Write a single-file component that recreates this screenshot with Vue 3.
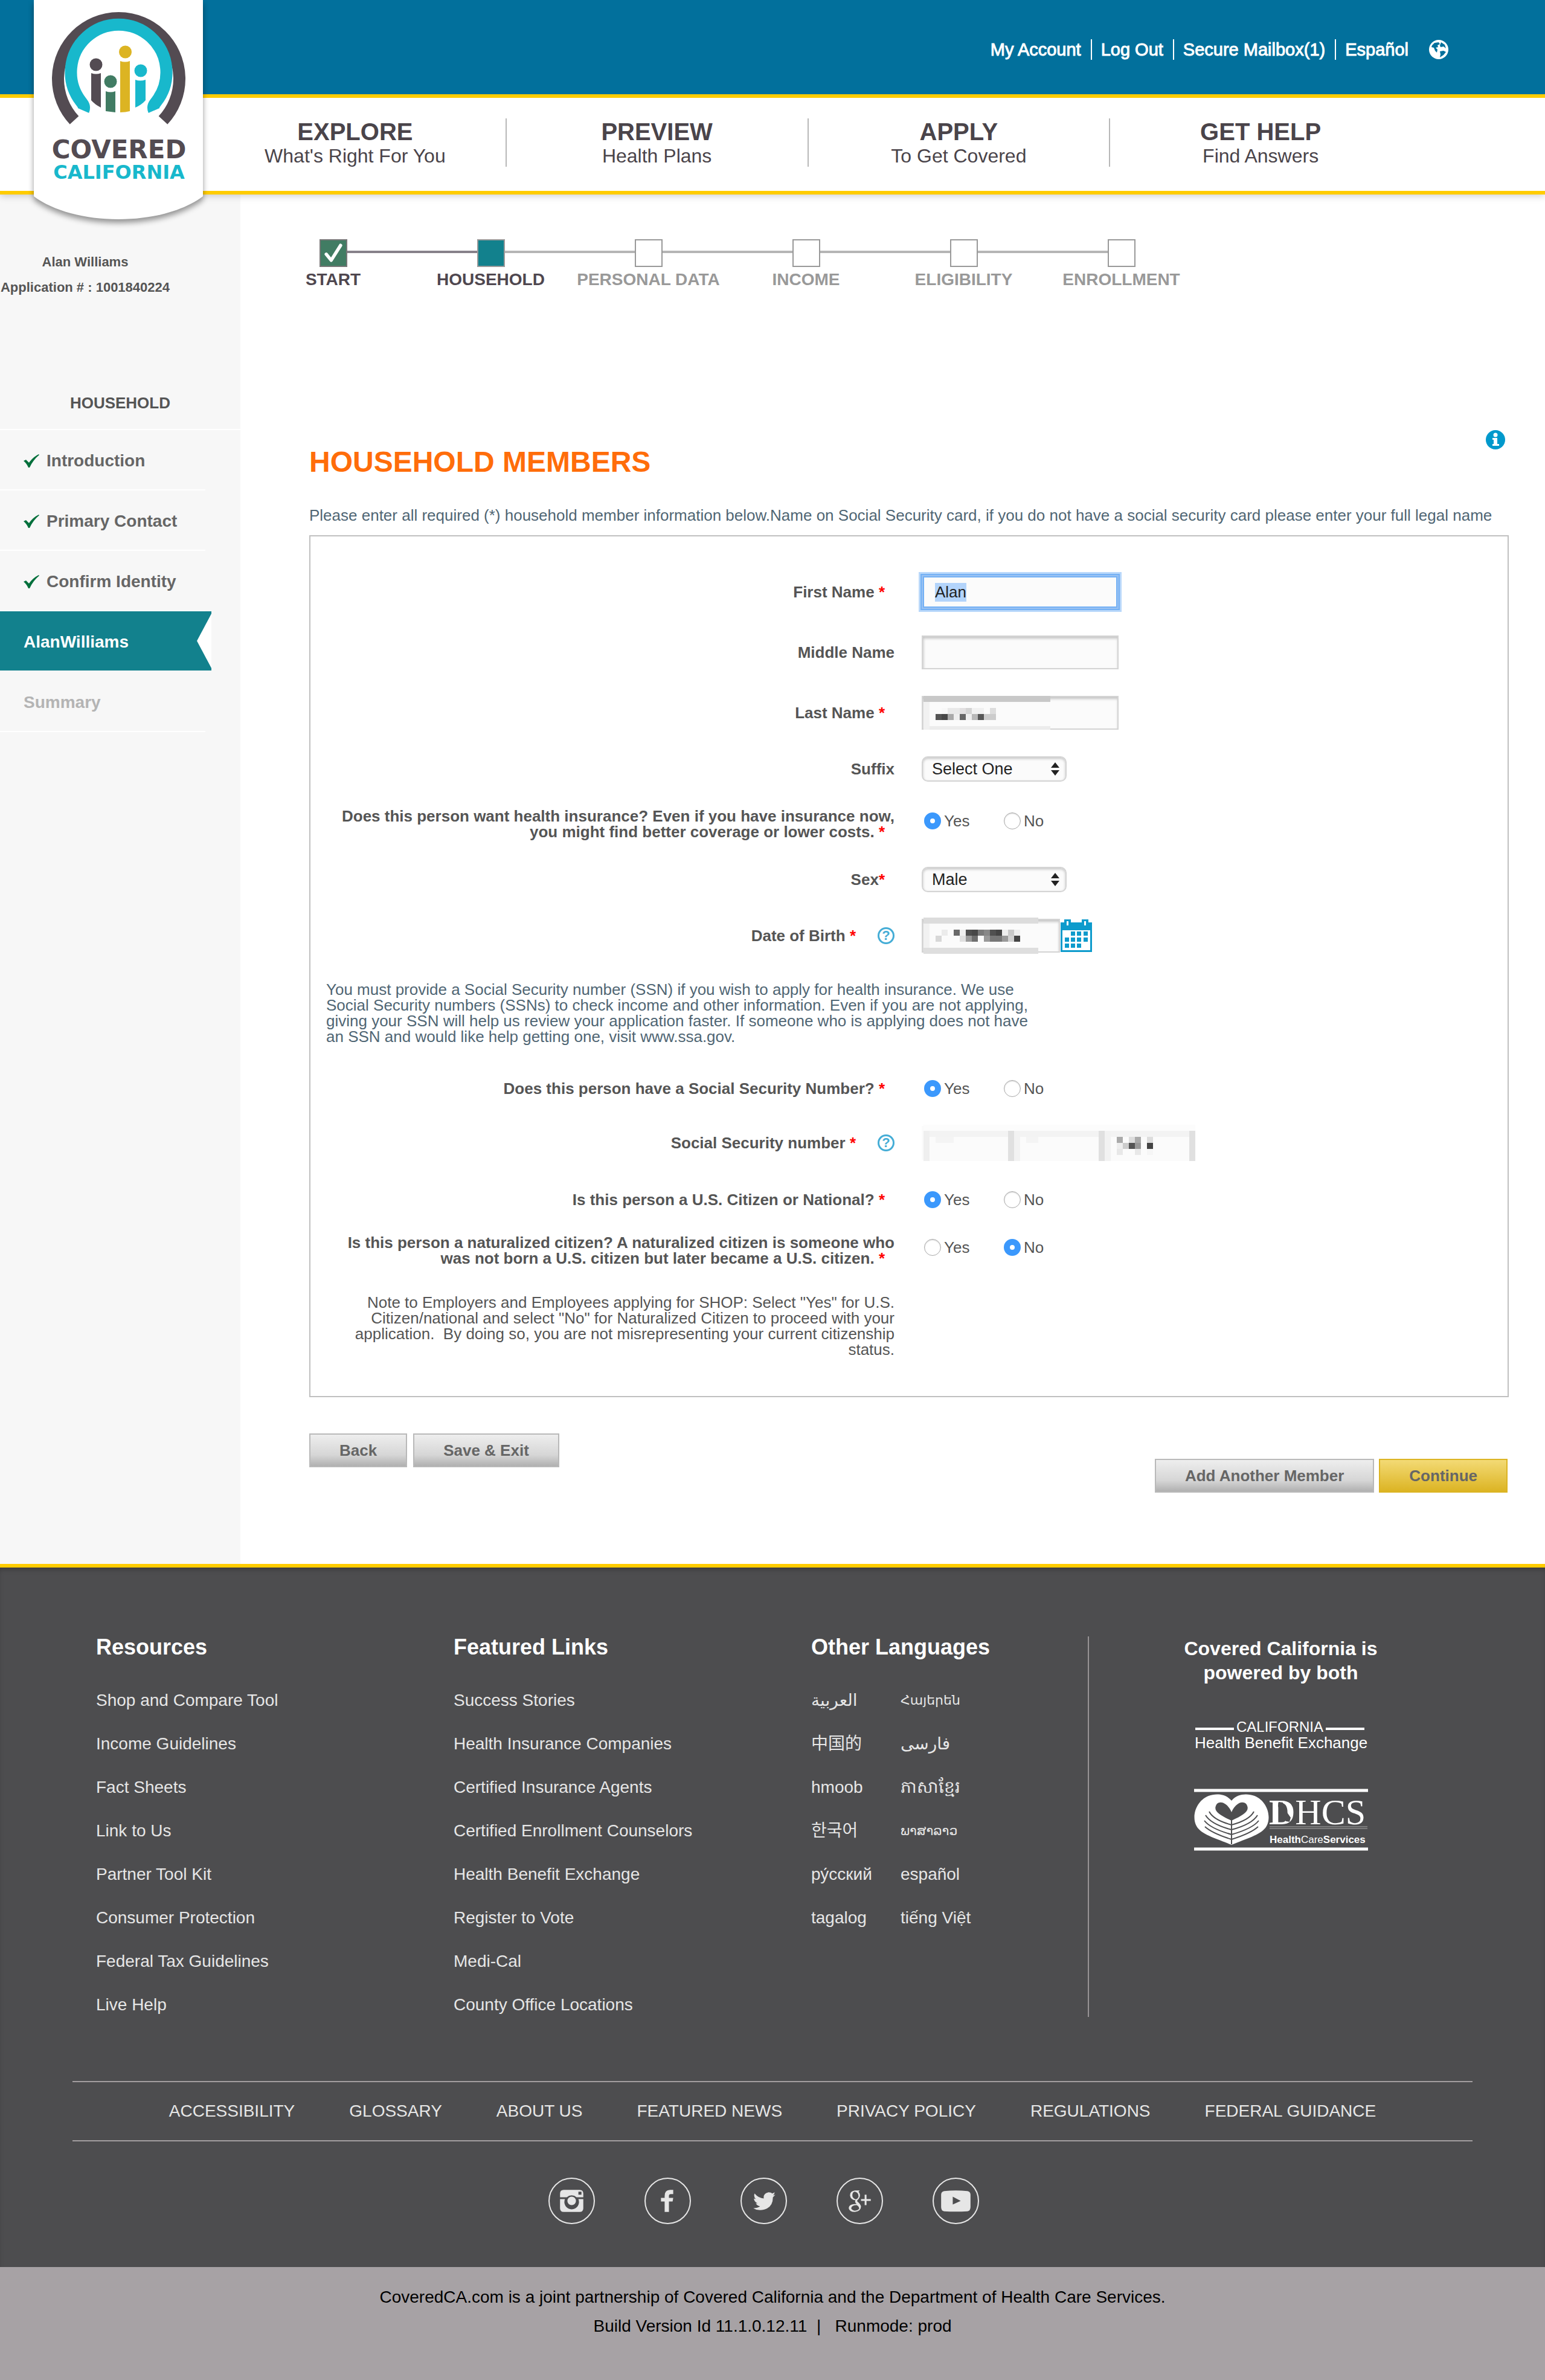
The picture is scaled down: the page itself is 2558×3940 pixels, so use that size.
<script setup>
import { onMounted, ref } from 'vue'

const navItems = [
  { title: 'EXPLORE', sub: "What's Right For You" },
  { title: 'PREVIEW', sub: 'Health Plans' },
  { title: 'APPLY', sub: 'To Get Covered' },
  { title: 'GET HELP', sub: 'Find Answers' },
]
const accountLinks = ['My Account', 'Log Out', 'Secure Mailbox(1)', 'Español']
const steps = [
  { label: 'START', state: 'done' },
  { label: 'HOUSEHOLD', state: 'current' },
  { label: 'PERSONAL DATA', state: 'todo' },
  { label: 'INCOME', state: 'todo' },
  { label: 'ELIGIBILITY', state: 'todo' },
  { label: 'ENROLLMENT', state: 'todo' },
]
const sideItems = [
  { label: 'Introduction', state: 'done' },
  { label: 'Primary Contact', state: 'done' },
  { label: 'Confirm Identity', state: 'done' },
  { label: 'AlanWilliams', state: 'active' },
  { label: 'Summary', state: 'todo' },
]
const resources = [
  'Shop and Compare Tool', 'Income Guidelines', 'Fact Sheets', 'Link to Us',
  'Partner Tool Kit', 'Consumer Protection', 'Federal Tax Guidelines', 'Live Help',
]
const featured = [
  'Success Stories', 'Health Insurance Companies', 'Certified Insurance Agents',
  'Certified Enrollment Counselors', 'Health Benefit Exchange', 'Register to Vote',
  'Medi-Cal', 'County Office Locations',
]
const languages = [
  { name: 'العربية', lang: 'ar' }, { name: 'Հայերեն', lang: 'hy' },
  { name: '中国的', lang: 'zh' }, { name: 'فارسی', lang: 'fa' },
  { name: 'hmoob', lang: 'hmn' }, { name: 'ភាសាខ្មែរ', lang: 'km' },
  { name: '한국어', lang: 'ko' }, { name: 'ພາສາລາວ', lang: 'lo' },
  { name: 'ру́сский', lang: 'ru' }, { name: 'español', lang: 'es' },
  { name: 'tagalog', lang: 'tl' }, { name: 'tiếng Việt', lang: 'vi' },
]
const footerNav = [
  'ACCESSIBILITY', 'GLOSSARY', 'ABOUT US', 'FEATURED NEWS',
  'PRIVACY POLICY', 'REGULATIONS', 'FEDERAL GUIDANCE',
]

// Privacy masks: [column, row, width, height, shade] in 10px cells
const lastNameMask = [
  [0, 0, 21, 1, '#c8c8c8'], [0, 1, 1, 5, '#f1f1f1'], [1, 1, 20, 4, '#fbfbfb'], [1, 5, 20, 1, '#ececec'],
  [3, 2, 1, 1, '#f8f8f8'], [4, 2, 2, 1, '#e9e9e9'], [6, 2, 1, 1, '#e2e0e1'], [7, 2, 1, 1, '#d4d4d4'],
  [8, 2, 2, 1, '#f1f1f1'], [11, 2, 1, 1, '#dddddd'], [2, 3, 1, 1, '#555555'], [3, 3, 1, 1, '#484848'],
  [4, 3, 1, 1, '#aaaaaa'], [5, 3, 1, 1, '#eeeeee'], [6, 3, 1, 1, '#666666'], [7, 3, 1, 1, '#eeeeee'],
  [8, 3, 1, 1, '#b8b8b8'], [9, 3, 1, 1, '#575757'], [10, 3, 2, 1, '#cccccc'],
]
const birthMask = [
  [0, 0, 19, 1, '#dcdcdc'], [0, 1, 1, 4, '#f1f1f1'], [1, 1, 18, 4, '#fbfbfb'], [0, 5, 19, 1, '#dedede'],
  [3, 2, 1, 1, '#ececec'], [5, 2, 1, 1, '#6a6a6a'], [6, 2, 1, 1, '#eeeeee'], [7, 2, 1, 1, '#4f4f4f'],
  [8, 2, 1, 1, '#484848'], [9, 2, 1, 1, '#7a7a7a'], [10, 2, 1, 1, '#888888'], [11, 2, 1, 1, '#505050'],
  [12, 2, 1, 1, '#444444'], [13, 2, 1, 1, '#eeeeee'], [14, 2, 1, 1, '#c8c8c8'], [15, 2, 1, 1, '#eeeeee'],
  [2, 3, 1, 1, '#d8d8d8'], [6, 3, 1, 1, '#e0e0e0'], [7, 3, 1, 1, '#999999'], [8, 3, 1, 1, '#6f6f6f'],
  [10, 3, 1, 1, '#999999'], [11, 3, 2, 1, '#777777'], [13, 3, 1, 1, '#999999'], [14, 3, 1, 1, '#d0d0d0'],
  [15, 3, 1, 1, '#444444'],
]
const ssnMask = [
  [0, 0, 45, 1, '#fcfcfc'], [0, 1, 45, 1, '#f3f3f3'], [0, 2, 45, 4, '#fbfbfb'], [0, 1, 1, 5, '#efefef'],
  [14, 1, 1, 5, '#e0e0e0'], [15, 1, 1, 5, '#f2f2f2'], [29, 1, 1, 5, '#e0e0e0'], [30, 1, 1, 5, '#f2f2f2'],
  [44, 1, 1, 5, '#e0e0e0'], [2, 2, 3, 1, '#f4f4f4'], [17, 2, 2, 1, '#f4f4f4'],
  [32, 2, 1, 1, '#aaaaaa'], [34, 2, 1, 1, '#dddddd'], [35, 2, 1, 1, '#aaaaaa'], [37, 2, 1, 1, '#dddddd'],
  [32, 3, 1, 1, '#eeeeee'], [33, 3, 1, 1, '#cccccc'], [34, 3, 1, 1, '#555555'], [35, 3, 1, 1, '#999999'],
  [37, 3, 1, 1, '#444444'], [32, 4, 1, 1, '#e8e8e8'], [35, 4, 1, 1, '#e8e8e8'], [37, 4, 1, 1, '#f6f6f6'],
]

const firstName = ref('Alan')
const wants = ref('Yes')
const hasSsn = ref('Yes')
const citizen = ref('Yes')
const naturalized = ref('No')
const firstInput = ref(null)

onMounted(() => {
  firstInput.value.focus()
  firstInput.value.select()
})
</script>

<template>
  <div class="page">
    <header class="header">
      <div class="topbar">
        <nav class="account" aria-label="Account">
          <a v-for="link in accountLinks" :key="link" href="#">{{ link }}</a>
          <svg class="globe" viewBox="0 0 32 32" aria-hidden="true">
            <circle cx="16" cy="16" r="16" fill="#fff" />
            <path d="M5 9 9 5l7-1 2 3-4 2 1 3-4 1 3 3-1 5-3-3-2-5-4-1zM20 4l6 4 2 6-4-3-5 1-1-3zM18 19l6-1 4 2-4 5-6 4 1-5z" fill="#02709c" />
          </svg>
        </nav>
      </div>
      <nav class="mainnav" aria-label="Main">
        <a v-for="item in navItems" :key="item.title" href="#" class="navitem">
          <strong>{{ item.title }}</strong>
          <span>{{ item.sub }}</span>
        </a>
      </nav>
      <a href="#" class="logo" aria-label="Covered California">
        <svg viewBox="0 0 312 390">
          <path class="badge" d="M16 0H296V325C264 349 212 363 156 363S48 349 16 325Z" fill="#fff" />
          <g transform="translate(-40 0)">
            <path d="M123 199A100.500 100.500 0 1 1 270 199" fill="none" stroke="#534b52" stroke-width="20" />
            <path d="M138 183C141 176 137 172 134 168A79 79 0 1 1 259 168C256 172 252 176 255 183" fill="none" stroke="#18b8cc" stroke-width="20" />
            <circle cx="159" cy="107" r="10.500" fill="#534b52" />
            <path d="M151 121Q159 124 167 121V178Q157 173 151 166Z" fill="#534b52" />
            <circle cx="183" cy="135" r="10.500" fill="#417c63" />
            <path d="M175 151Q183 154 191 151V186L175 184Z" fill="#417c63" />
            <circle cx="207.500" cy="86" r="10.500" fill="#dcb423" />
            <path d="M199 101Q207 104 215 101V184Q208 186 199 186Z" fill="#dcb423" />
            <circle cx="233" cy="117" r="10.500" fill="#18b8cc" />
            <path d="M224 132Q232 135 241 132V166Q234 174 224 178Z" fill="#18b8cc" />
            <text x="197" y="262" class="wordmark covered">COVERED</text>
            <text x="197" y="296" class="wordmark california">CALIFORNIA</text>
          </g>
        </svg>
      </a>
    </header>

    <div class="body">
      <aside class="sidebar">
        <div class="applicant">
          <p>Alan Williams</p>
          <p>Application # : 1001840224</p>
        </div>
        <h2>HOUSEHOLD</h2>
        <ul>
          <li v-for="item in sideItems" :key="item.label" :class="item.state">
            <a href="#">
              <svg v-if="item.state === 'done'" class="tick" viewBox="0 0 26 22" aria-hidden="true">
                <path d="M0 11 4 9 9 14Q15 5 25 0L26 1Q16 9 10 22H8Q5 15 0 11Z" fill="#04703c" />
              </svg>
              {{ item.label }}
            </a>
            <svg v-if="item.state === 'active'" class="notch" viewBox="0 0 24 90" aria-hidden="true">
              <path d="M24 0V90L0 45Z" fill="#fff" />
            </svg>
          </li>
        </ul>
      </aside>

      <main>
        <ol class="steps">
          <li v-for="step in steps" :key="step.label" :class="step.state">
            <span class="box">
              <svg v-if="step.state === 'done'" viewBox="0 0 46 46" aria-hidden="true">
                <path d="M10 25 19 36 36 9" fill="none" stroke="#fff" stroke-width="6" stroke-linecap="round" stroke-linejoin="round" />
              </svg>
            </span>
            <span class="steplabel">{{ step.label }}</span>
          </li>
        </ol>

        <form class="content" @submit.prevent>
          <div class="titlebar">
            <h1>HOUSEHOLD MEMBERS</h1>
            <button type="button" class="info" aria-label="Information">
              <svg viewBox="0 0 32 32" aria-hidden="true">
                <circle cx="16" cy="16" r="16" fill="#0099cc" />
                <circle cx="16" cy="8" r="3.500" fill="#fff" />
                <path d="M11 13h8v10h3v3H11v-3h2v-7h-2z" fill="#fff" />
              </svg>
            </button>
          </div>
          <p class="intro">Please enter all required (*) household member information below.Name on Social Security card, if you do not have a social security card please enter your full legal name</p>

          <div class="panel">
            <div class="row text">
              <label for="first">First Name <i class="req">*</i></label>
              <div class="field"><input id="first" ref="firstInput" v-model="firstName" type="text"></div>
            </div>
            <div class="row text">
              <label for="middle">Middle Name</label>
              <div class="field"><input id="middle" type="text"></div>
            </div>
            <div class="row text">
              <label for="last">Last Name <i class="req">*</i></label>
              <div class="field">
                <input id="last" type="text">
                <svg class="mask" width="210" height="56" aria-hidden="true">
                  <rect v-for="(c, i) in lastNameMask" :key="i" :x="c[0] * 10" :y="c[1] * 10" :width="c[2] * 10" :height="c[3] * 10" :fill="c[4]" />
                </svg>
              </div>
            </div>
            <div class="row choice">
              <label for="suffix">Suffix</label>
              <div class="field">
                <span class="select"><select id="suffix"><option>Select One</option></select>
                  <svg viewBox="0 0 14 22" aria-hidden="true"><path d="M0 9 7 0l7 9zM0 13h14l-7 9z" fill="#222" /></svg></span>
              </div>
            </div>
            <div class="row choice" role="radiogroup" aria-labelledby="q-wants">
              <span id="q-wants" class="label long">Does this person want health insurance? Even if you have insurance now, you might find better coverage or lower costs. <i class="req">*</i></span>
              <div class="field">
                <label v-for="o in ['Yes', 'No']" :key="o" class="radio"><input v-model="wants" type="radio" name="wants" :value="o">{{ o }}</label>
              </div>
            </div>
            <div class="row wide">
              <label for="sex">Sex<i class="req">*</i></label>
              <div class="field">
                <span class="select"><select id="sex"><option>Male</option></select>
                  <svg viewBox="0 0 14 22" aria-hidden="true"><path d="M0 9 7 0l7 9zM0 13h14l-7 9z" fill="#222" /></svg></span>
              </div>
            </div>
            <div class="row birth">
              <div class="label withhelp">
                <label for="birth">Date of Birth <i class="req">*</i></label>
                <button type="button" class="help" aria-label="Help with date of birth">?</button>
              </div>
              <div class="field">
                <input id="birth" type="text" class="date">
                <svg class="mask" width="190" height="60" aria-hidden="true">
                  <rect v-for="(c, i) in birthMask" :key="i" :x="c[0] * 10" :y="c[1] * 10" :width="c[2] * 10" :height="c[3] * 10" :fill="c[4]" />
                </svg>
                <button type="button" class="calendar" aria-label="Choose date">
                  <svg viewBox="0 0 52 54" aria-hidden="true">
                    <path d="M0 5h6V0h11v5h18V0h11v5h6v49H0zM3 18v33h46V18zM10 3v7h3V3zM39 3v7h3V3z" fill="#0d9bcc" fill-rule="evenodd" />
                    <path d="M17 20h7v7h-7zM27 20h7v7h-7zM38 20h7v7h-7zM7 30h7v7H7zM17 30h7v7h-7zM27 30h7v7h-7zM38 30h7v7h-7zM7 40h7v7H7zM17 40h7v7h-7zM27 40h7v7h-7z" fill="#0d9bcc" />
                  </svg>
                </button>
              </div>
            </div>
            <p class="ssninfo">You must provide a Social Security number (SSN) if you wish to apply for health insurance. We use Social Security numbers (SSNs) to check income and other information. Even if you are not applying, giving your SSN will help us review your application faster. If someone who is applying does not have an SSN and would like help getting one, visit www.ssa.gov.</p>
            <div class="row choice" role="radiogroup" aria-labelledby="q-ssn">
              <span id="q-ssn" class="label">Does this person have a Social Security Number? <i class="req">*</i></span>
              <div class="field">
                <label v-for="o in ['Yes', 'No']" :key="o" class="radio"><input v-model="hasSsn" type="radio" name="hasSsn" :value="o">{{ o }}</label>
              </div>
            </div>
            <div class="row number">
              <div class="label withhelp">
                <label for="ssn1">Social Security number <i class="req">*</i></label>
                <button type="button" class="help" aria-label="Help with Social Security number">?</button>
              </div>
              <div class="field">
                <input id="ssn1" type="text" class="ssn" aria-label="Social Security number, first part">
                <input type="text" class="ssn" aria-label="Social Security number, second part">
                <input type="text" class="ssn" aria-label="Social Security number, third part">
                <svg class="mask" width="450" height="60" aria-hidden="true">
                  <rect v-for="(c, i) in ssnMask" :key="i" :x="c[0] * 10" :y="c[1] * 10" :width="c[2] * 10" :height="c[3] * 10" :fill="c[4]" />
                </svg>
              </div>
            </div>
            <div class="row number" role="radiogroup" aria-labelledby="q-citizen">
              <span id="q-citizen" class="label">Is this person a U.S. Citizen or National? <i class="req">*</i></span>
              <div class="field">
                <label v-for="o in ['Yes', 'No']" :key="o" class="radio"><input v-model="citizen" type="radio" name="citizen" :value="o">{{ o }}</label>
              </div>
            </div>
            <div class="row tight" role="radiogroup" aria-labelledby="q-natural">
              <span id="q-natural" class="label long">Is this person a naturalized citizen? A naturalized citizen is someone who was not born a U.S. citizen but later became a U.S. citizen. <i class="req">*</i></span>
              <div class="field">
                <label v-for="o in ['Yes', 'No']" :key="o" class="radio"><input v-model="naturalized" type="radio" name="naturalized" :value="o">{{ o }}</label>
              </div>
            </div>
            <p class="note">Note to Employers and Employees applying for SHOP: Select "Yes" for U.S. Citizen/national and select "No" for Naturalized Citizen to proceed with your application.&nbsp; By doing so, you are not misrepresenting your current citizenship status.</p>
          </div>

          <div class="actions">
            <div class="group">
              <button type="button" class="btn">Back</button>
              <button type="button" class="btn">Save &amp; Exit</button>
            </div>
            <div class="group right">
              <button type="button" class="btn">Add Another Member</button>
              <button type="submit" class="btn primary">Continue</button>
            </div>
          </div>
        </form>
      </main>
    </div>

    <footer>
      <div class="footmain">
        <div class="cols">
          <section>
            <h3>Resources</h3>
            <ul><li v-for="l in resources" :key="l"><a href="#">{{ l }}</a></li></ul>
          </section>
          <section>
            <h3>Featured Links</h3>
            <ul><li v-for="l in featured" :key="l"><a href="#">{{ l }}</a></li></ul>
          </section>
          <section>
            <h3>Other Languages</h3>
            <ul class="langs"><li v-for="l in languages" :key="l.lang" :lang="l.lang"><a href="#">{{ l.name }}</a></li></ul>
          </section>
          <section class="powered">
            <h4>Covered California is<br>powered by both</h4>
            <svg class="exchange" viewBox="0 0 300 60" role="img" aria-label="California Health Benefit Exchange">
              <path d="M8 19H72M224 19H288" stroke="#fff" stroke-width="4" />
              <text x="148" y="24" text-anchor="middle" font-size="24">CALIFORNIA</text>
              <text x="7" y="51" font-size="26">Health Benefit Exchange</text>
            </svg>
            <svg class="dhcs" viewBox="0 0 288 104" role="img" aria-label="DHCS Health Care Services">
              <path d="M0 3H288M0 100H288" stroke="#fff" stroke-width="5" />
              <path d="M62 20C52 8 36 8 24 12 4 20-4 44 3 60 10 76 36 82 62 93 88 82 114 76 121 60 128 44 120 20 100 12 88 8 72 8 62 20Z" fill="#fff" />
              <path d="M62 39C66 28 78 18 86 25 94 36 84 43 62 53 40 43 30 36 38 25 46 18 58 28 62 39Z" fill="#4d4d4f" />
              <path d="M62 52V92M62 60Q32 52 25 38M62 68Q28 59 19 44M62 76Q27 66 17 53M62 84Q30 74 18 63M62 60Q92 52 99 38M62 68Q96 59 105 44M62 76Q97 66 107 53M62 84Q94 74 106 63" fill="none" stroke="#4d4d4f" stroke-width="2" />
              <text x="124" y="59" font-size="60" class="serif"><tspan font-weight="700">D</tspan>HCS</text>
              <path d="M140 22l7 1 1 8 12 17-2 7-6-1-8-13-5-12z" fill="#4d4d4f" />
              <path d="M125 63H287M125 66H287" stroke="#aaa" stroke-width="1" />
              <text x="125" y="90" font-size="17" font-weight="700">Health<tspan font-weight="400">Care</tspan>Services</text>
            </svg>
          </section>
        </div>

        <nav class="footnav" aria-label="Footer">
          <a v-for="l in footerNav" :key="l" href="#">{{ l }}</a>
        </nav>

        <div class="social">
          <a href="#" aria-label="Instagram"><svg viewBox="0 0 76 76">
            <circle cx="38" cy="38" r="37" class="ring" />
            <path fill-rule="evenodd" d="M25 20H51Q57 20 57 26V32H46A12 12 0 0 0 30 32H19V26Q19 20 25 20ZM49 23V28H54V23ZM19 35H27A12 12 0 1 0 49 35H57V50Q57 56 51 56H25Q19 56 19 50Z" />
            <circle cx="38" cy="38" r="7" />
          </svg></a>
          <a href="#" aria-label="Facebook"><svg viewBox="0 0 76 76">
            <circle cx="38" cy="38" r="37" class="ring" />
            <path d="M47 20V27H43Q40 27 40 30V33H47L46 39H40V56H33V39H27V33H33V30Q33 20 42 20Z" />
          </svg></a>
          <a href="#" aria-label="Twitter"><svg viewBox="0 0 76 76">
            <circle cx="38" cy="38" r="37" class="ring" />
            <path d="M23 26Q30 34 38 34 37 25 46 24 50 24 52 26L56 24Q55 28 53 29L57 28 53 32Q53 48 39 52 29 55 21 50 28 50 32 47 27 46 25 42H28Q22 39 22 34L25 35Q21 31 23 26Z" />
          </svg></a>
          <a href="#" aria-label="Google Plus"><svg viewBox="0 0 76 76">
            <circle cx="38" cy="38" r="37" class="ring" />
            <path d="M38 21H30Q22 22 22 29 23 36 31 37 29 40 33 43 20 43 20 50 21 56 30 56 40 55 40 47 39 43 34 39 33 37 36 35 41 29 36 23ZM30 23Q36 24 36 31 34 36 30 35 25 33 26 27 27 23 30 23ZM33 45Q37 47 37 51 34 54 30 54 25 53 24 50 25 45 33 45ZM46 28H49V35H56V38H49V45H46V38H40V35H46Z" fill-rule="evenodd" />
          </svg></a>
          <a href="#" aria-label="YouTube"><svg viewBox="0 0 76 76">
            <circle cx="38" cy="38" r="37" class="ring" />
            <path d="M19 22Q38 20 57 22 62 23 62 28V48Q62 54 57 55 38 56 19 55 14 54 14 48V28Q14 23 19 22ZM33 31V44L46 38Z" fill-rule="evenodd" />
          </svg></a>
        </div>
      </div>
      <div class="legal">
        <p>CoveredCA.com is a joint partnership of Covered California and the Department of Health Care Services.</p>
        <p>Build Version Id 11.1.0.12.11 &nbsp;|&nbsp;&nbsp; Runmode: prod</p>
      </div>
    </footer>
  </div>
</template>

<style>
body { background: #fff; }
::selection { background: #b3d4fb; color: #222; }
</style>

<style scoped>
.page, .page * { box-sizing: border-box; }
.page {
  font-family: "Liberation Sans", Arial, "Noto Sans CJK SC", "Noto Sans CJK KR", "DejaVu Sans", sans-serif;
  font-size: 26px;
  line-height: 26px;
  color: #555;
}
h1, h2, h3, h4, p, ul, ol { margin: 0; padding: 0; }
ul, ol { list-style: none; }
a { color: inherit; text-decoration: none; }
button, input, select { font-family: inherit; font-size: inherit; margin: 0; }

.header { position: relative; z-index: 2; box-shadow: 0 2px 12px rgba(0, 0, 0, 0.2); background: #fff; }
.topbar { height: 162px; background: #02709c; border-bottom: 6px solid #fc0; display: flex; justify-content: flex-end; padding: 64px 160px 0 0; }
.account { display: flex; align-items: center; height: 36px; color: #fff; font-size: 29px; line-height: 34px; }
.account a { padding: 0 16px 0 15px; border-left: 2px solid #fff; -webkit-text-stroke: 1px #fff; }
.account a:first-child { border-left: 0; }
.account a:nth-child(4) { padding-right: 0; }
.globe { width: 32px; height: 32px; margin-left: 34px; }
.mainnav { display: flex; padding: 34px 220px 34px 339px; height: 160px; border-bottom: 6px solid #fc0; color: #4a444a; }
.navitem { flex: 1; height: 80px; display: flex; flex-direction: column; align-items: center; gap: 4px; padding-top: 2px; border-right: 2px solid #b8b8b8; }
.navitem:last-child { border-right-color: transparent; }
.navitem strong { font-size: 40px; line-height: 40px; }
.navitem span { font-size: 32px; line-height: 32px; }
.logo { position: absolute; left: 40px; top: 0; width: 312px; height: 390px; }
.logo svg { display: block; width: 100%; }
.badge { filter: drop-shadow(0 6px 5px rgba(0, 0, 0, 0.4)); }
.wordmark { font-family: "DejaVu Sans", sans-serif; font-weight: 700; text-anchor: middle; }
.covered { font-size: 42px; fill: #534b52; }
.california { font-size: 32px; fill: #18b8cc; }

.body { display: flex; }
.sidebar { flex: 0 0 398px; background: #f7f7f7; padding-top: 91px; font-weight: 700; }
.applicant { width: 282px; text-align: center; font-size: 22px; line-height: 42px; margin-bottom: 157px; white-space: nowrap; }
.sidebar h2 { font-size: 26px; line-height: 26px; text-align: right; padding: 0 116px 30px 0; border-bottom: 2px solid #fff; }
.sidebar li { position: relative; width: 340px; height: 100px; border-bottom: 2px solid #fff; font-size: 28px; color: #666; }
.sidebar li a { display: flex; align-items: center; height: 98px; padding: 4px 0 0 39px; gap: 12px; }
.tick { width: 26px; height: 22px; }
.sidebar .active { width: 350px; border-bottom-color: #f7f7f7; }
.sidebar .active a { background: #12818d; color: #fff; }
.sidebar .todo { color: #b4b4b4; }
.notch { position: absolute; right: 0; top: 4px; width: 24px; height: 90px; }

main { flex: 1; min-width: 0; padding: 74px 60px 118px 0; }
.steps { display: flex; margin-left: 23px; }
.steps li { flex: 0 0 261px; display: flex; flex-direction: column; align-items: center; position: relative; color: #999; font-weight: 700; }
.steps li + li::before { content: ""; position: absolute; top: 19px; right: 50%; width: 100%; height: 4px; background: #b5b5b5; }
.steps li.current::before { background: #87818a; }
.box { position: relative; z-index: 1; width: 46px; height: 46px; border: 2px solid #999; background: #fff; }
.done .box { background: #417c63; border-color: #777; }
.current .box { background: #12818d; }
.steps li:nth-child(1), .steps li:nth-child(2) { z-index: 1; color: #4f474f; }
.steps li:nth-child(1) { z-index: 2; }
.box svg { display: block; width: 42px; height: 42px; }
.steplabel { margin-top: 7px; font-size: 28px; line-height: 28px; white-space: nowrap; }

.content { margin: 235px 0 0 114px; }
.titlebar { display: flex; justify-content: space-between; align-items: flex-start; }
h1 { color: #ff6d0a; font-size: 48px; line-height: 48px; padding-top: 29px; }
.info { width: 32px; height: 32px; padding: 0; border: 0; background: none; margin-right: 6px; }
.info svg { display: block; width: 32px; height: 32px; }
.intro { margin: 51px 0 20px; color: #506674; white-space: nowrap; }
.panel { border: 2px solid #c0c0c0; padding: 42px 0 64px; }
.row { display: grid; grid-template-columns: 967fr 1015fr; align-items: center; }
.row.text { height: 100px; }
.row.choice { height: 86px; }
.row.wide { height: 108px; }
.row.birth { height: 78px; }
.row.number { height: 94px; }
.row.tight { height: 64px; }
.row > label, .row > .label { text-align: right; font-weight: 700; padding-left: 30px; }
.row > .long { padding-top: 10px; }
.req { font-style: normal; color: #f00; margin-right: 16px; }
.withhelp { display: flex; justify-content: flex-end; align-items: center; gap: 20px; }
.help { width: 28px; height: 28px; border: 3px solid #45add6; border-radius: 50%; background: none; color: #45add6; padding: 0; font-size: 22px; font-weight: 700; line-height: 22px; }
.field { position: relative; display: flex; align-items: center; padding-left: 45px; }
.field input[type="text"] { width: 326px; height: 56px; border: 2px solid #d4d4d4; background: #fbfbfb; box-shadow: inset 1px 3px 4px rgba(0, 0, 0, 0.22); padding: 0 20px; color: #222; border-radius: 0; outline: none; }
.field input[type="text"]:focus { border-color: #9ac2f2; box-shadow: 0 0 0 2px #74b1f5, 0 0 0 5px rgba(116, 177, 245, 0.5), inset 0 0 0 2px #74b1f5; }
.field input[type="text"].date { width: 229px; }
.field input[type="text"].ssn { width: 150px; border: 0; box-shadow: none; }
.mask { position: absolute; left: 48px; }
.calendar { width: 52px; height: 54px; padding: 0; border: 0; background: none; margin-left: 1px; }
.calendar svg { display: block; width: 52px; height: 54px; }
.select { position: relative; display: block; width: 240px; height: 42px; }
.select select { appearance: none; width: 240px; height: 42px; border: 2px solid #d4d4d4; border-radius: 10px; background: #fbfbfb; box-shadow: inset 0 2px 4px rgba(0, 0, 0, 0.22); padding: 0 15px; color: #222; font-size: 27px; line-height: 30px; }
.select svg { position: absolute; right: 12px; top: 10px; width: 14px; height: 22px; pointer-events: none; }
.radio { display: flex; align-items: center; gap: 5px; width: 132px; padding-left: 4px; }
.radio input { appearance: none; width: 28px; height: 28px; border-radius: 50%; border: 1px solid #aaa; background: #fff; box-shadow: inset 0 1px 2px rgba(0, 0, 0, 0.2); }
.radio input:checked { border: 10px solid #3b98fc; box-shadow: none; }
.ssninfo { margin: 37px 0 30px 26px; width: 1180px; color: #506674; }
.note { width: 967px; padding-left: 30px; text-align: right; margin: 46px 0 0; }
.actions { display: flex; justify-content: space-between; margin-top: 60px; }
.group { display: flex; gap: 10px; }
.group.right { padding: 42px 2px 0 0; gap: 8px; }
.btn { height: 56px; padding: 0 48px; border: 2px solid #b9b9b9; border-radius: 0; background: linear-gradient(#eee, #d6d6d6 65%, #b0b0b0); color: #666; font-weight: 700; }
.btn.primary { border-color: #dcb423; background: linear-gradient(#f3da75, #dcb423); }

.footmain { background: #4d4d4f; border-top: 6px solid #fc0; box-shadow: inset 0 6px 10px -4px rgba(0, 0, 0, 0.3); padding: 114px 120px 71px; color: #e6e6e6; font-size: 28px; }
.cols { display: grid; grid-template-columns: 592fr 592fr 458fr 637fr; padding-left: 39px; }
.cols h3 { color: #fff; font-size: 36px; line-height: 36px; margin-bottom: 34px; }
.cols li { height: 72px; line-height: 72px; white-space: nowrap; }
.langs { display: grid; grid-template-columns: 148px 1fr; }
.langs li:lang(hy), .langs li:lang(lo) { font-size: 22px; }
.powered { height: 630px; border-left: 2px solid #979395; display: flex; flex-direction: column; align-items: center; }
.cols h4 { color: #fff; font-size: 32px; line-height: 40px; text-align: center; }
.exchange { width: 300px; height: 60px; margin-top: 54px; fill: #fff; }
.dhcs { width: 288px; height: 104px; margin-top: 58px; fill: #fff; }
.serif { font-family: "Liberation Serif", serif; }
.footnav { margin-top: 90px; height: 100px; border-top: 2px solid #a39ea0; border-bottom: 2px solid #a39ea0; display: flex; justify-content: center; align-items: center; gap: 90px; }
.social { display: flex; justify-content: center; gap: 82px; padding: 60px 30px 0 0; }
.social svg { display: block; width: 77px; height: 77px; fill: #e6e6e6; }
.social .ring { fill: none; stroke: #e6e6e6; stroke-width: 2; }
.legal { background: #a7a2a5; color: #000; text-align: center; font-size: 28px; line-height: 48px; padding: 26px 0 66px; }
</style>
